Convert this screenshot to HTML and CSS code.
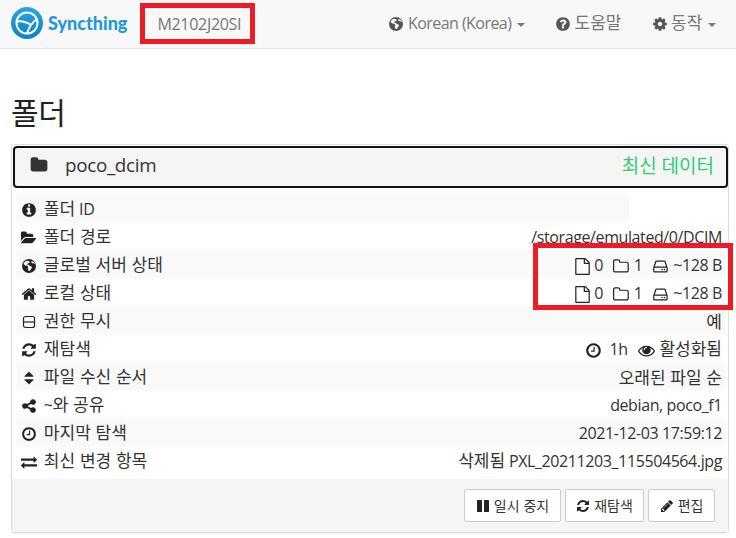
FILE: index.html
```html
<!DOCTYPE html>
<html lang="ko">
<head>
    <meta charset="UTF-8">
    <meta name="viewport" content="width=device-width, initial-scale=1.0">
    <title>Syncthing</title>
    <link rel="stylesheet" href="styles.css">
</head>
<body>
    <svg class="icon-defs" xmlns="http://www.w3.org/2000/svg">
        <symbol id="i-folder" viewBox="0 0 1792 1792"><path d="M1728 608v704q0 92-66 158t-158 66h-1216q-92 0-158-66t-66-158v-960q0-92 66-158t158-66h320q92 0 158 66t66 158v32h672q92 0 158 66t66 158z"/></symbol>
        <symbol id="i-folder-open" viewBox="0 0 1920 1792"><path d="M1815 952q0 31-31 66l-336 396q-43 51-120.5 86.5t-143.5 35.5h-1088q-34 0-60.5-13t-26.5-43q0-31 31-66l336-396q43-51 120.5-86.5t143.5-35.5h1088q34 0 60.5 13t26.5 43zm-343-344v160h-832q-94 0-197 47.5t-164 119.5l-337 396-5 6q0-4-.5-12.5t-.5-12.5v-960q0-92 66-158t158-66h320q92 0 158 66t66 158v32h544q92 0 158 66t66 158z"/></symbol>
        <symbol id="i-info" viewBox="0 0 1792 1792"><path d="M1152 1376v-160q0-14-9-23t-23-9h-96v-512q0-14-9-23t-23-9h-320q-14 0-23 9t-9 23v160q0 14 9 23t23 9h96v320h-96q-14 0-23 9t-9 23v160q0 14 9 23t23 9h448q14 0 23-9t9-23zm-128-896v-160q0-14-9-23t-23-9h-192q-14 0-23 9t-9 23v160q0 14 9 23t23 9h192q14 0 23-9t9-23zm640 416q0 209-103 385.5t-279.5 279.5-385.5 103-385.5-103-279.5-279.5-103-385.5 103-385.5 279.5-279.5 385.5-103 385.5 103 279.5 279.5 103 385.5z"/></symbol>
        <symbol id="i-question" viewBox="0 0 1792 1792"><path d="M1024 1376v-192q0-14-9-23t-23-9h-192q-14 0-23 9t-9 23v192q0 14 9 23t23 9h192q14 0 23-9t9-23zm256-672q0-88-55.5-163t-138.5-116-170-41q-243 0-371 213-15 24 8 42l132 100q7 6 19 6 16 0 25-12 53-68 86-92 34-24 86-24 48 0 85.5 26t37.5 59q0 38-20 61t-68 45q-63 28-115.5 86.5t-52.5 125.5v36q0 14 9 23t23 9h192q14 0 23-9t9-23q0-19 21.5-49.5t54.5-49.5q32-18 49-28.5t46-35 44.5-48 28-60.5 12.5-81zm384 192q0 209-103 385.5t-279.5 279.5-385.5 103-385.5-103-279.5-279.5-103-385.5 103-385.5 279.5-279.5 385.5-103 385.5 103 279.5 279.5 103 385.5z"/></symbol>
        <symbol id="i-cog" viewBox="0 0 1792 1792"><path d="M1152 896q0-106-75-181t-181-75-181 75-75 181 75 181 181 75 181-75 75-181zm512-109v222q0 12-8 23t-20 13l-185 28q-19 54-39 91 35 50 107 138 10 12 10 25t-9 23q-27 37-99 108t-94 71q-12 0-26-9l-138-108q-44 23-91 38-16 136-29 186-7 28-36 28h-222q-14 0-24.5-8.5t-11.5-21.5l-28-184q-49-16-90-37l-141 107q-10 9-25 9-14 0-25-11-126-114-165-168-7-10-7-23 0-12 8-23 15-21 51-66.5t54-70.5q-27-50-41-99l-183-27q-13-2-21-12.5t-8-23.5v-222q0-12 8-23t19-13l186-28q14-46 39-92-40-57-107-138-10-12-10-24 0-10 9-23 26-36 98.5-107.5t94.5-71.5q13 0 26 10l138 107q44-23 91-38 16-136 29-186 7-28 36-28h222q14 0 24.5 8.5t11.5 21.5l28 184q49 16 90 37l142-107q9-9 24-9 13 0 25 10 129 119 165 170 7 8 7 22 0 12-8 23-15 21-51 66.5t-54 70.5q26 50 41 98l183 28q13 2 21 12.5t8 23.5z"/></symbol>
        <symbol id="i-home" viewBox="0 0 1792 1792"><path d="M1472 992v480q0 26-19 45t-45 19h-384v-384h-256v384h-384q-26 0-45-19t-19-45v-480q0-1 .5-3t.5-3l575-474 575 474q1 2 1 6zm223-69l-62 74q-8 9-21 11h-3q-13 0-21-7l-692-577-692 577q-12 8-24 7-13-2-21-11l-62-74q-8-10-7-23.5t11-21.5l719-599q32-26 76-26t76 26l244 204v-195q0-14 9-23t23-9h192q14 0 23 9t9 23v408l219 182q10 8 11 21.5t-7 23.5z"/></symbol>
        <symbol id="i-refresh" viewBox="0 0 1792 1792"><path d="M1639 1056q0 5-1 7-64 268-268 434.5t-478 166.5q-146 0-282.5-55t-243.5-157l-129 129q-19 19-45 19t-45-19-19-45v-448q0-26 19-45t45-19h448q26 0 45 19t19 45-19 45l-137 137q71 66 161 102t187 36q134 0 250-65t186-179q11-17 53-117 8-23 30-23h192q13 0 22.5 9.5t9.5 22.5zm25-800v448q0 26-19 45t-45 19h-448q-26 0-45-19t-19-45 19-45l138-138q-148-137-349-137-134 0-250 65t-186 179q-11 17-53 117-8 23-30 23h-199q-13 0-22.5-9.5t-9.5-22.5v-7q65-268 270-434.5t480-166.5q146 0 284 55.5t245 156.5l130-129q19-19 45-19t45 19 19 45z"/></symbol>
        <symbol id="i-sort" viewBox="0 0 1792 1792"><path d="M1408 1088q0 26-19 45l-448 448q-19 19-45 19t-45-19l-448-448q-19-19-19-45t19-45 45-19h896q26 0 45 19t19 45zm0-384q0 26-19 45t-45 19h-896q-26 0-45-19t-19-45 19-45l448-448q19-19 45-19t45 19l448 448q19 19 19 45z"/></symbol>
        <symbol id="i-share" viewBox="0 0 1792 1792"><path d="M1344 1024q133 0 226.5 93.5t93.5 226.5-93.5 226.5-226.5 93.5-226.5-93.5-93.5-226.5q0-12 2-34l-360-180q-92 86-218 86-133 0-226.5-93.5t-93.5-226.5 93.5-226.5 226.5-93.5q126 0 218 86l360-180q-2-22-2-34 0-133 93.5-226.5t226.5-93.5 226.5 93.5 93.5 226.5-93.5 226.5-226.5 93.5q-126 0-218-86l-360 180q2 22 2 34t-2 34l360 180q92-86 218-86z"/></symbol>
        <symbol id="i-exchange" viewBox="0 0 1792 1792"><path d="M1792 1184v192q0 13-9.5 22.5t-22.5 9.5h-1376v192q0 13-9.5 22.5t-22.5 9.5q-12 0-24-10l-319-320q-9-9-9-22 0-14 9-23l320-320q9-9 23-9 13 0 22.5 9.5t9.5 22.5v192h1376q13 0 22.5 9.5t9.5 22.5zm0-544q0 14-9 23l-320 320q-9 9-23 9-13 0-22.5-9.5t-9.5-22.5v-192h-1376q-13 0-22.5-9.5t-9.5-22.5v-192q0-13 9.5-22.5t22.5-9.5h1376v-192q0-14 9-23t23-9q12 0 24 10l319 319q9 9 9 23z"/></symbol>
        <symbol id="i-pause" viewBox="0 0 1792 1792"><path d="M1664 192v1408q0 26-19 45t-45 19h-512q-26 0-45-19t-19-45v-1408q0-26 19-45t45-19h512q26 0 45 19t19 45zm-896 0v1408q0 26-19 45t-45 19h-512q-26 0-45-19t-19-45v-1408q0-26 19-45t45-19h512q26 0 45 19t19 45z"/></symbol>
        <symbol id="i-pencil" viewBox="0 0 1792 1792"><path d="M491 1536l91-91-235-235-91 91v107h128v128h107zm523-928q0-22-22-22-10 0-17 7l-542 542q-7 7-7 17 0 22 22 22 10 0 17-7l542-542q7-7 7-17zm-54-192l416 416-832 832h-416v-416zm683 96q0 53-37 90l-166 166-416-416 166-165q36-38 90-38 53 0 91 38l235 234q37 39 37 91z"/></symbol>
        <symbol id="i-eye" viewBox="0 0 1792 1792"><path d="M1664 960q-152-236-381-353 61 104 61 225 0 185-131.5 316.5t-316.5 131.5-316.5-131.5-131.5-316.5q0-121 61-225-229 117-381 353 133 205 333.5 326.5t434.5 121.5 434.5-121.5 333.5-326.5zm-720-384q0-20-14-34t-34-14q-125 0-214.5 89.5t-89.5 214.5q0 20 14 34t34 14 34-14 14-34q0-86 61-147t147-61q20 0 34-14t14-34zm848 384q0 34-20 69-140 230-376.5 368.5t-499.5 138.5-499.5-139-376.5-368q-20-35-20-69t20-69q140-229 376.5-368t499.5-139 499.5 139 376.5 368q20 35 20 69z"/></symbol>
        <symbol id="i-clock" viewBox="0 0 1792 1792"><path d="M1024 544v448q0 14-9 23t-23 9h-320q-14 0-23-9t-9-23v-64q0-14 9-23t23-9h224v-352q0-14 9-23t23-9h64q14 0 23 9t9 23zm416 352q0-148-73-273t-198-198-273-73-273 73-198 198-73 273 73 273 198 198 273 73 273-73 198-198 73-273zm224 0q0 209-103 385.5t-279.5 279.5-385.5 103-385.5-103-279.5-279.5-103-385.5 103-385.5 279.5-279.5 385.5-103 385.5 103 279.5 279.5 103 385.5z"/></symbol>
        <symbol id="i-file" viewBox="0 0 1792 1792"><path d="M1596 380q28 28 48 76t20 88v1152q0 40-28 68t-68 28h-1344q-40 0-68-28t-28-68v-1600q0-40 28-68t68-28h896q40 0 88 20t76 48zm-444-244v376h376q-10-29-22-41l-313-313q-12-12-41-22zm384 1528v-1024h-416q-40 0-68-28t-28-68v-416h-768v1536h1280z"/></symbol>
        <symbol id="i-folder-o" viewBox="0 0 1792 1792"><path d="M1536 1312v-704q0-40-28-68t-68-28h-704q-40 0-68-28t-28-68v-64q0-40-28-68t-68-28h-320q-40 0-68 28t-28 68v960q0 40 28 68t68 28h1216q40 0 68-28t28-68zm128-704v704q0 92-66 158t-158 66h-1216q-92 0-158-66t-66-158v-960q0-92 66-158t158-66h320q92 0 158 66t66 158v32h672q92 0 158 66t66 158z"/></symbol>
        <symbol id="i-hdd" viewBox="0 0 1792 1792"><path d="M1040 1216q0 33-23.5 56.5t-56.5 23.5-56.5-23.5-23.5-56.5 23.5-56.5 56.5-23.5 56.5 23.5 23.5 56.5zm256 0q0 33-23.5 56.5t-56.5 23.5-56.5-23.5-23.5-56.5 23.5-56.5 56.5-23.5 56.5 23.5 23.5 56.5zm128 160v-320q0-13-9.5-22.5t-22.5-9.5h-1216q-13 0-22.5 9.5t-9.5 22.5v320q0 13 9.5 22.5t22.5 9.5h1216q13 0 22.5-9.5t9.5-22.5zm-1230-480h1180l-157-482q-4-13-16-21.5t-26-8.5h-782q-14 0-26 8.5t-16 21.5zm1358 160v320q0 66-47 113t-113 47h-1216q-66 0-113-47t-47-113v-320q0-25 16-75l197-606q17-53 63-86t101-33h782q55 0 101 33t63 86l197 606q16 50 16 75z"/></symbol>
        <symbol id="i-globe" viewBox="0 0 16 16"><path fill-rule="evenodd" d="M8 1a7 7 0 1 1 0 14A7 7 0 0 1 8 1zM6.300 2.400C4.500 2.900 3.100 4.200 2.500 6l1.800 1.400 2 .3 1 1.200-.6 1.800 1 2.300 1.300-.2.900-1.900 1.100-1-.5-1.300-1.700-.6-1-1.300-1.100.4-.6-1 1.100-.9 1-.1.600-1.100-1-.9-1.800.1zM10.800 3l-.6 1.300.9.900 1.200-.3.700 1.100.9-.3C13.400 4.500 12.300 3.500 10.800 3z"/></symbol>
        <symbol id="i-perm" viewBox="0 0 16 16"><rect x="2.500" y="2.500" width="11" height="11" rx="2" fill="none" stroke="currentColor" stroke-width="1.200"/><path d="M3 8h10" fill="none" stroke="currentColor" stroke-width="1.200"/></symbol>
    </svg>

    <nav class="navbar">
        <a class="brand" href="#">
            <svg class="logo" viewBox="0 0 32 32">
                <defs>
                    <linearGradient id="logoFill" x1="0" y1="0" x2="0" y2="1">
                        <stop offset="0" stop-color="#2aa6dc"/>
                        <stop offset="1" stop-color="#0e82c4"/>
                    </linearGradient>
                </defs>
                <circle cx="16" cy="16" r="16" fill="url(#logoFill)"/>
                <circle cx="16" cy="16" r="10.500" fill="none" stroke="#fff" stroke-width="2"/>
                <path d="M5.500 14.500Q13 13 20 18M26.500 11.500Q23 14 20 18M20 18Q17.500 22 16 26.500" fill="none" stroke="#fff" stroke-width="2"/>
            </svg>
            <span class="brand-name">Syncthing</span>
        </a>
        <span class="device-name">M2102J20SI</span>
        <ul class="nav-right">
            <li><svg class="icon"><use href="#i-globe"/></svg> Korean (Korea) <span class="caret"></span></li>
            <li><svg class="icon"><use href="#i-question"/></svg> <span class="ko">도움말</span></li>
            <li><svg class="icon"><use href="#i-cog"/></svg> <span class="ko">동작</span> <span class="caret"></span></li>
        </ul>
    </nav>

    <div class="container">
        <h1>폴더</h1>

        <div class="panel">
            <div class="panel-heading">
                <svg class="icon folder-icon"><use href="#i-folder"/></svg>
                <span class="folder-name">poco_dcim</span>
                <span class="folder-status">최신 데이터</span>
            </div>

            <div class="panel-body">
                <div class="row row-short">
                    <span class="label"><svg class="icon"><use href="#i-info"/></svg> <span class="ko">폴더</span> ID</span>
                </div>
                <div class="row">
                    <span class="label"><svg class="icon"><use href="#i-folder-open"/></svg> <span class="ko">폴더 경로</span></span>
                    <span class="value">/storage/emulated/0/DCIM</span>
                </div>
                <div class="row">
                    <span class="label"><svg class="icon"><use href="#i-globe"/></svg> <span class="ko">글로벌 서버 상태</span></span>
                    <span class="value stats">
                        <span><svg class="icon"><use href="#i-file"/></svg> 0</span>
                        <span><svg class="icon"><use href="#i-folder-o"/></svg> 1</span>
                        <span><svg class="icon"><use href="#i-hdd"/></svg> ~128 B</span>
                    </span>
                </div>
                <div class="row">
                    <span class="label"><svg class="icon"><use href="#i-home"/></svg> <span class="ko">로컬 상태</span></span>
                    <span class="value stats">
                        <span><svg class="icon"><use href="#i-file"/></svg> 0</span>
                        <span><svg class="icon"><use href="#i-folder-o"/></svg> 1</span>
                        <span><svg class="icon"><use href="#i-hdd"/></svg> ~128 B</span>
                    </span>
                </div>
                <div class="row">
                    <span class="label"><svg class="icon"><use href="#i-perm"/></svg> <span class="ko">권한 무시</span></span>
                    <span class="value ko">예</span>
                </div>
                <div class="row">
                    <span class="label"><svg class="icon"><use href="#i-refresh"/></svg> <span class="ko">재탐색</span></span>
                    <span class="value stats">
                        <span><svg class="icon"><use href="#i-clock"/></svg>&nbsp; 1h</span>
                        <span><svg class="icon"><use href="#i-eye"/></svg> <span class="ko active-label">활성화됨</span></span>
                    </span>
                </div>
                <div class="row">
                    <span class="label"><svg class="icon"><use href="#i-sort"/></svg> <span class="ko">파일 수신 순서</span></span>
                    <span class="value ko">오래된 파일 순</span>
                </div>
                <div class="row">
                    <span class="label"><svg class="icon"><use href="#i-share"/></svg> ~<span class="ko">와 공유</span></span>
                    <span class="value">debian, poco_f1</span>
                </div>
                <div class="row">
                    <span class="label"><svg class="icon"><use href="#i-clock"/></svg> <span class="ko">마지막 탐색</span></span>
                    <span class="value">2021-12-03 17:59:12</span>
                </div>
                <div class="row">
                    <span class="label"><svg class="icon"><use href="#i-exchange"/></svg> <span class="ko">최신 변경 항목</span></span>
                    <span class="value"><span class="ko">삭제됨</span> PXL_20211203_115504564.jpg</span>
                </div>
            </div>

            <div class="panel-footer">
                <button class="btn"><svg class="icon"><use href="#i-pause"/></svg> 일시 중지</button>
                <button class="btn"><svg class="icon"><use href="#i-refresh"/></svg> 재탐색</button>
                <button class="btn"><svg class="icon"><use href="#i-pencil"/></svg> 편집</button>
            </div>
        </div>
    </div>

    <div class="mark mark-device"></div>
    <div class="mark mark-stats"></div>
</body>
</html>
```

FILE: styles.css
```css
* {
    box-sizing: border-box;
}
body {
    font-family: "Open Sans", "Noto Sans CJK KR", sans-serif;
    font-size: 16px;
    letter-spacing: -0.3px;
    color: #333;
    background-color: #fff;
    margin: 0;
    padding: 0;
    position: relative;
    height: 538px;
    overflow: hidden;
}
.ko {
    font-size: 17px;
    line-height: 1;
    letter-spacing: 0;
    font-family: "Noto Sans CJK KR", sans-serif;
}
.icon-defs {
    display: none;
}
.icon {
    width: 16px;
    height: 16px;
    fill: currentColor;
    color: #222;
    vertical-align: -3px;
}
.navbar {
    display: flex;
    align-items: center;
    height: 49px;
    background-color: #f8f8f8;
    border-bottom: 1px solid #e7e7e7;
    padding: 0 11px;
}
.brand {
    display: flex;
    align-items: center;
    gap: 5px;
    text-decoration: none;
    margin-top: -3px;
}
.logo {
    width: 32px;
    height: 32px;
}
.brand-name {
    font-family: "Lato", sans-serif;
    font-weight: 900;
    letter-spacing: 0;
    font-size: 18px;
    color: #1f9ad6;
}
.device-name {
    margin-left: 30px;
    color: #777;
}
.nav-right {
    display: flex;
    gap: 30px;
    list-style: none;
    margin: 0 0 0 auto;
    padding: 0 9px 2px 0;
    color: #777;
    letter-spacing: -0.55px;
}
.nav-right li {
    line-height: 22px;
}
.nav-right .icon {
    color: #555;
}
.caret {
    display: inline-block;
    width: 0;
    height: 0;
    margin-left: 2px;
    vertical-align: middle;
    border-top: 4px solid #777;
    border-left: 4px solid transparent;
    border-right: 4px solid transparent;
}
.container {
    padding: 0 7px 0 11px;
}
h1 {
    font-weight: 400;
    font-size: 30px;
    line-height: 36px;
    color: #222;
    margin: 46px 0 13px;
}
.panel {
    width: 718px;
    height: 389px;
    border: 1px solid #ddd;
    border-radius: 3px;
    box-shadow: 0 1px 1px rgba(0, 0, 0, 0.05);
    display: flex;
    flex-direction: column;
    padding-top: 1px;
}
.panel-heading {
    display: flex;
    align-items: center;
    height: 42px;
    margin: 0 0 0 1px;
    padding: 0 12px 4px 15px;
    background-color: #f5f5f5;
    border: 2px solid #111;
    border-radius: 4px;
    font-size: 18.800px;
}
.folder-icon {
    width: 18px;
    height: 18px;
    color: #333;
}
.folder-name {
    margin-left: 17px;
}
.folder-status {
    margin-left: auto;
    font-size: 19px;
    letter-spacing: 0;
    color: #2ecc71;
}
.panel-body {
    flex: 1;
    padding: 6px 3px 5px 5px;
}
.row {
    display: flex;
    justify-content: space-between;
    align-items: center;
    height: 28px;
    padding: 1px 3px 0 4px;
    color: #333;
    white-space: nowrap;
}
.row:nth-child(odd) {
    background-color: #f9f9f9;
}
.row-short {
    width: 612px;
}
.label .icon {
    margin-right: 3px;
}
.value {
    letter-spacing: -0.4px;
}
.value .ko, .value.ko {
    letter-spacing: 0;
}
.stats {
    display: flex;
    align-items: baseline;
    gap: 10px;
}
.stats .icon {
    width: 17px;
    height: 17px;
    vertical-align: -4px;
}
.active-label {
    margin-left: 1px;
}
.panel-footer {
    display: flex;
    justify-content: flex-end;
    gap: 4px;
    height: 53px;
    padding: 10px 13px 0 0;
    background-color: #f5f5f5;
}
.btn {
    height: 33px;
    margin: 0;
    padding: 0 10.500px 2px;
    font-family: "Noto Sans CJK KR", sans-serif;
    letter-spacing: 0;
    font-size: 14px;
    color: #333;
    background-color: #fff;
    border: 1px solid #ccc;
    border-radius: 2px;
}
.btn .icon {
    width: 14px;
    height: 14px;
    vertical-align: -2px;
}
.mark {
    position: absolute;
    border: 5px solid #ed1c24;
}
.mark-device {
    left: 140px;
    top: 3px;
    width: 115px;
    height: 41px;
}
.mark-stats {
    left: 533px;
    top: 243px;
    width: 200px;
    height: 67px;
}
```
